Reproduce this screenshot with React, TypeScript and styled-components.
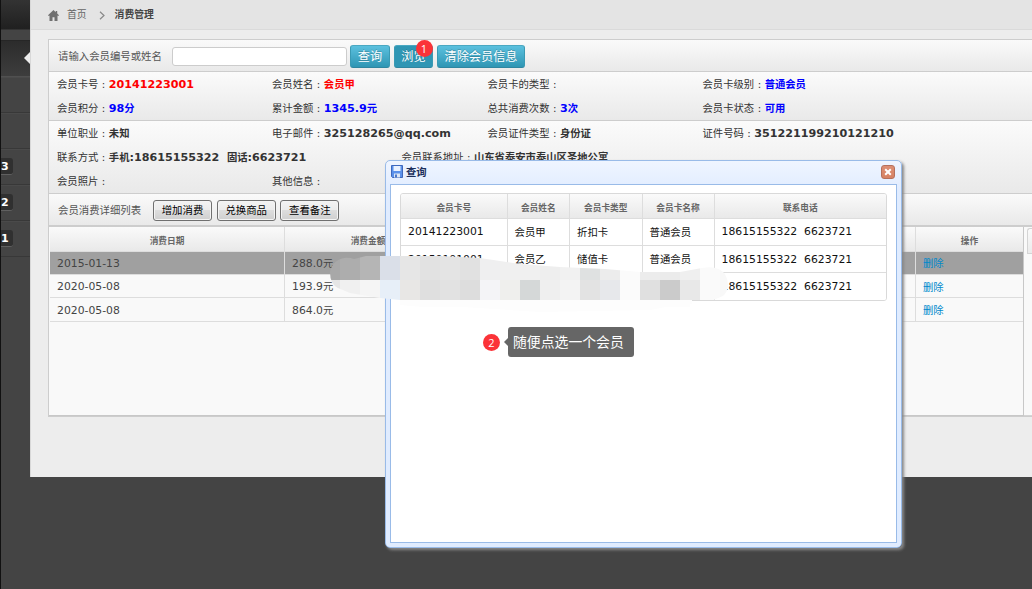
import React from "react";
import styled, { createGlobalStyle } from "styled-components";

const Global = createGlobalStyle`
  * { box-sizing: border-box; }
  html, body { margin: 0; padding: 0; height: 100%; overflow: hidden; }
  body {
    background: #444;
    color: #333;
    font-family: "DejaVu Sans", "Noto Sans CJK SC", sans-serif;
    font-size: 10.33px;
    line-height: 14px;
  }
`;

const Latin = styled.span`
  font-size: 10.82px;
  b & { font-size: 11.15px; }
`;

const Colon = styled.span`
  display: inline-block;
  flex: none;
  width: 10.5px;
  text-align: center;
`;

/* Digits and Latin letters are set slightly larger than the Chinese glyphs. */
const Mixed = ({ text }: { text: string }) => (
  <span>
    {text.split(/([ -~\u00a0]+)/).map((part, i) =>
      /^[ -~\u00a0]+$/.test(part) ? <Latin key={i}>{part}</Latin> : part
    )}
  </span>
);

const Page = styled.div`
  position: relative;
  display: flex;
  width: 1032px;
  height: 589px;
  overflow: hidden;
`;

const Sidebar = styled.aside`
  width: 30px;
  height: 589px;
  border-left: 1px solid #111;
  background: #444;
`;
const SideTop = styled.div`
  height: 30px;
  background: linear-gradient(#333, #202020);
  border-bottom: 1px solid #333;
`;
const SideGap = styled.div`
  height: 11px;
  background: #444;
  border-bottom: 1px solid #262626;
`;
const SideItem = styled.div<{ $active?: boolean }>`
  position: relative;
  display: flex;
  align-items: center;
  height: 36px;
  border-bottom: 1px solid #383838;
  border-top: 1px solid #4a4a4a;
  ${(p) =>
    p.$active &&
    `background: linear-gradient(#2c2c2c, #3d3d3d); border-top-color: #2c2c2c; border-bottom-color: #505050;`}
  &::after {
    content: "";
    display: ${(p) => (p.$active ? "block" : "none")};
    position: absolute;
    right: 0;
    top: 10px;
    border: 6.5px solid transparent;
    border-left: 0;
    border-right-color: #ededed;
  }
`;
const SideBadge = styled.span`
  width: 12px;
  height: 17px;
  margin-bottom: 1px;
  border-radius: 0 3px 3px 0;
  background: #303030;
  border-bottom: 1px solid #606060;
  color: #fff;
  font-size: 11px;
  font-weight: bold;
  line-height: 17px;
`;

const Main = styled.main`
  flex: 1;
  height: 477px;
  background: #ededed;
  border-left: 1px solid #d8d8d8;
  overflow: hidden;
`;
const Breadcrumb = styled.nav`
  display: flex;
  align-items: center;
  height: 30px;
  padding: 1px 0 0 17px;
  background: #e4e4e4;
  border-bottom: 1px solid #dadada;
  svg { flex: none; }
`;
const Crumb = styled.span<{ $current?: boolean; $gap: number }>`
  margin-left: ${(p) => p.$gap}px;
  font-size: 9.8px;
  font-weight: ${(p) => (p.$current ? "bold" : "normal")};
  color: ${(p) => (p.$current ? "#444" : "#666")};
`;
const Chevron = styled.svg`
  margin-left: 12px;
`;

const Panel = styled.section`
  margin: 9px 0 0 17px;
  height: 378px;
  border: 1px solid #cdcdcd;
  border-right: 0;
  background: #f9f9f9;
`;
const SearchBar = styled.div`
  display: flex;
  align-items: center;
  height: 32px;
  padding-left: 9px;
  background: linear-gradient(#fafafa, #e9e9e9);
  border-bottom: 1px solid #cdcdcd;
  color: #555;
`;
const SearchLabel = styled.span`
  width: 114px;
  font-size: 10.4px;
`;
const SearchInput = styled.input`
  width: 175px;
  height: 19px;
  margin: 1px 3px 0 0;
  padding: 0 4px;
  border: 1px solid #ccc;
  border-radius: 3px;
  background: #fff;
`;
const TealButton = styled.button<{ $width: number; $pressed?: boolean }>`
  width: ${(p) => p.$width}px;
  height: 23px;
  margin: 1px 4px 0 0;
  padding: 1px 0 0;
  border: 1px solid #3a9cb8;
  border-color: #4aa8c2 #3a9ab4 #2f86a0;
  border-radius: 3px;
  background: ${(p) => (p.$pressed ? "#2f96b4" : "linear-gradient(#5bc0de, #2f96b4)")};
  color: #fff;
  font-family: inherit;
  font-size: 12.15px;
  line-height: 18px;
  text-shadow: 0 -1px 0 rgba(0, 0, 0, 0.2);
  white-space: nowrap;
`;

const InfoBlock = styled.div<{ $height: number; $columns: string }>`
  display: grid;
  grid-template-columns: ${(p) => p.$columns};
  grid-auto-rows: 24.1px;
  height: ${(p) => p.$height}px;
  padding-left: 8px;
  background: linear-gradient(#fbfbfb, #e9e9e9);
  border-bottom: 1px solid #cdcdcd;
`;
const InfoCell = styled.div<{ $start?: number; $tone?: string }>`
  display: flex;
  align-items: center;
  white-space: pre;
  grid-column-start: ${(p) => p.$start ?? "auto"};
  b { color: ${(p) => p.$tone ?? "#333"}; }
`;

const Info = ({ label, value = "", tone, start }: { label: string; value?: string; tone?: string; start?: number }) => (
  <InfoCell $tone={tone} $start={start}>
    <span>{label}</span>
    <Colon>:</Colon>
    <b><Mixed text={value} /></b>
  </InfoCell>
);

const Toolbar = styled.div`
  display: flex;
  align-items: center;
  height: 33px;
  padding: 1px 0 0 9px;
  background: linear-gradient(#fafafa, #e9e9e9);
  border-bottom: 2px solid #cdcdcd;
  color: #555;
`;
const ToolbarTitle = styled.span`
  width: 95px;
  font-size: 10.4px;
`;
const PlainButton = styled.button`
  width: 59px;
  height: 21px;
  margin-right: 4.7px;
  padding: 0;
  border: 1px solid #707070;
  border-radius: 3px;
  background: linear-gradient(#f3f3f3, #ebebeb 50%, #dddddd 50%, #cfcfcf);
  box-shadow: inset 0 0 0 1px #f4f4f4;
  color: #000;
  font-family: inherit;
  font-size: 10.4px;
  line-height: 16px;
  white-space: nowrap;
`;

const RecordArea = styled.div`
  display: flex;
  height: 189px;
`;
const RecordPane = styled.div`
  width: 975px;
  padding: 0 0 0 1px;
  border-right: 1px solid #c8c8c8;
  border-bottom: 1px solid #c8c8c8;
`;
const ScrollPane = styled.div`
  flex: 1;
  padding: 1px 0 0 3px;
  border-bottom: 1px solid #d4d4d4;
  &::before {
    content: "";
    display: block;
    height: 24px;
    border: 1px solid #d4d4d4;
    border-right: 0;
    border-radius: 3px 0 0 0;
    background: linear-gradient(#fafafa, #ebebeb);
  }
`;
const RecordTable = styled.div`
  border-bottom: 1px solid #ddd;
`;
const RecordRow = styled.div<{ $kind?: "head" | "selected" }>`
  display: grid;
  grid-template-columns: 235px 167px 464px 107px;
  height: ${(p) => (p.$kind === "head" ? 24.6 : 23.2)}px;
  border-bottom: 1px solid #ddd;
  color: #444;
  background: ${(p) =>
    p.$kind === "head" ? "linear-gradient(#fafafa, #e9e9e9)" : p.$kind === "selected" ? "#a0a0a0" : "#f9f9f9"};
  &:last-child { border-bottom: 0; }
`;
const RecordCell = styled.div<{ $head?: boolean }>`
  display: flex;
  align-items: center;
  justify-content: ${(p) => (p.$head ? "center" : "flex-start")};
  padding-left: ${(p) => (p.$head ? 0 : 7)}px;
  padding-top: ${(p) => (p.$head ? 4 : 1.5)}px;
  border-right: 1px solid #ddd;
  font-size: ${(p) => (p.$head ? "8.7px" : "inherit")};
  font-weight: ${(p) => (p.$head ? "bold" : "normal")};
  color: ${(p) => (p.$head ? "#666" : "inherit")};
  white-space: nowrap;
  &:last-child { border-right: 0; }
`;
const DeleteLink = styled.a`
  color: #0088cc;
`;

const Dialog = styled.div`
  position: absolute;
  left: 385px;
  top: 160px;
  width: 517px;
  height: 388px;
  padding: 0 4px 4px;
  border: 1px solid #99bbe8;
  border-radius: 5px;
  background: linear-gradient(#eff5ff, #e0ecff 30px);
  box-shadow: 2px 2px 3px #888;
`;
const DialogHead = styled.div`
  display: flex;
  align-items: center;
  height: 23px;
  padding: 0 2px 2px 1px;
  color: #1c2f5c;
  font-weight: bold;
`;
const DialogTitle = styled.span`
  flex: 1;
  margin-left: 3px;
`;
const CloseButton = styled.button`
  display: flex;
  align-items: center;
  justify-content: center;
  width: 14px;
  height: 14px;
  padding: 0;
  border: 1px solid #b5705c;
  border-radius: 3px;
  background: linear-gradient(#dd8f74, #d78263);
`;
const DialogBody = styled.div`
  height: 359px;
  padding: 8px 9px;
  border: 1px solid #99bbe8;
  background: #fff;
`;
const MemberTable = styled.div`
  width: 487px;
  border: 1px solid #d9d9d9;
  border-radius: 3px;
  overflow: hidden;
`;
const MemberRow = styled.div<{ $head?: boolean }>`
  display: grid;
  grid-template-columns: 106.5px 62.5px 72.5px 72px 1fr;
  height: ${(p) => (p.$head ? 24.5 : 27.4)}px;
  border-bottom: 1px solid #ddd;
  background: ${(p) => (p.$head ? "linear-gradient(#fafafa, #e9e9e9)" : "#fff")};
  &:last-child { border-bottom: 0; height: 26.6px; }
`;
const MemberCell = styled.div<{ $head?: boolean }>`
  display: flex;
  align-items: center;
  justify-content: ${(p) => (p.$head ? "center" : "flex-start")};
  padding: ${(p) => (p.$head ? "4px 0 0" : "0.5px 0 0 7px")};
  border-right: 1px solid #ddd;
  color: ${(p) => (p.$head ? "#666" : "#111")};
  font-size: ${(p) => (p.$head ? "8.7px" : "10.4px")};
  font-weight: ${(p) => (p.$head ? "bold" : "normal")};
  white-space: pre;
  &:last-child { border-right: 0; }
`;

const Mosaic = styled.svg`
  position: absolute;
  left: 320px;
  top: 250px;
  pointer-events: none;
`;
const Marker = styled.span<{ $x: number; $y: number }>`
  position: absolute;
  left: ${(p) => p.$x}px;
  top: ${(p) => p.$y}px;
  width: 17px;
  height: 17px;
  border-radius: 50%;
  background: #fb3338;
  color: #fff;
  font-family: "Open Sans", sans-serif;
  font-size: 11px;
  line-height: 17px;
  text-align: center;
`;
const Tip = styled.div`
  position: absolute;
  left: 508px;
  top: 327px;
  width: 126px;
  height: 30px;
  padding-left: 5px;
  border-radius: 3px;
  background: #666;
  color: #fff;
  font-size: 13.85px;
  line-height: 31px;
  white-space: nowrap;
  &::before {
    content: "";
    position: absolute;
    left: -4px;
    top: 11px;
    border: 4px solid transparent;
    border-left: 0;
    border-right-color: #666;
  }
`;

const records = [
  { date: "2015-01-13", amount: "288.0元" },
  { date: "2020-05-08", amount: "193.9元" },
  { date: "2020-05-08", amount: "864.0元" },
];
const phone = "18615155322\u00a0\u00a06623721";
const members = [
  ["20141223001", "会员甲", "折扣卡", "普通会员", phone],
  ["20150101001", "会员乙", "储值卡", "普通会员", phone],
  ["", "", "", "", phone],
];
const upper = ["#a8a8a8", "#adadad", "#b5b5b5", "#dadfe8", "#e6e6e6", "#e2e2e2", "#e4e4e4", "#e1e1e1", "#efeff0", "#f0f0f0", "#f0f0f0", "#eeeeee", "#f1f1f1", "#dfe1e1", "#ececec", "#fbfbfb", "#ececec", "#ebebeb", "#efefef", "#fafafa", "#f8f8f8"];
const lower = ["#e5e5e5", "#f0f0f0", "#f5f5f5", "#e7eff8", "#e8e7e5", "#dfdfdf", "#e2e2e2", "#dddddd", "#f4f4f7", "#efefed", "#d5d8d8", "#efefef", "#f3f3f3", "#e3e3e3", "#e7e8eb", "#fbfbfb", "#e0e0e0", "#cbcbcb", "#e8e8e8", "#fafafa", "#f8f8f8"];

export default function App() {
  return (
    <Page>
      <Global />
      <Sidebar>
        <SideTop />
        <SideGap />
        <SideItem $active />
        <SideItem />
        <SideItem />
        <SideItem><SideBadge>3</SideBadge></SideItem>
        <SideItem><SideBadge>2</SideBadge></SideItem>
        <SideItem><SideBadge>1</SideBadge></SideItem>
      </Sidebar>
      <Main>
        <Breadcrumb>
          <svg width="11" height="11" viewBox="0 0 11 11"><path d="M5.5 0 0 5.3l.7.8.8-.7V11h3V7.2h2V11h3V5.4l.8.7.7-.8-1.8-1.8V1H7.7v1.2z" fill="#707070" /></svg>
          <Crumb $gap={8}>首页</Crumb>
          <Chevron width="7" height="9" viewBox="0 0 7 9"><path d="m1 .8 4 3.7-4 3.7" fill="none" stroke="#888" strokeWidth="1.2" /></Chevron>
          <Crumb $gap={9} $current>消费管理</Crumb>
        </Breadcrumb>
        <Panel>
          <SearchBar>
            <SearchLabel>请输入会员编号或姓名</SearchLabel>
            <SearchInput />
            <TealButton $width={40}>查询</TealButton>
            <TealButton $width={39} $pressed>浏览</TealButton>
            <TealButton $width={88}>清除会员信息</TealButton>
          </SearchBar>
          <InfoBlock $height={49} $columns="215px 215.5px 215px 1fr">
            <Info label="会员卡号" value="20141223001" tone="#f00" />
            <Info label="会员姓名" value="会员甲" tone="#f00" />
            <Info label="会员卡的类型" />
            <Info label="会员卡级别" value="普通会员" tone="#00f" />
            <Info label="会员积分" value="98分" tone="#00f" />
            <Info label="累计金额" value="1345.9元" tone="#00f" />
            <Info label="总共消费次数" value="3次" tone="#00f" />
            <Info label="会员卡状态" value="可用" tone="#00f" />
          </InfoBlock>
          <InfoBlock $height={73} $columns="215px 129.5px 86px 215px 1fr">
            <Info label="单位职业" value="未知" />
            <Info label="电子邮件" value="325128265@qq.com" />
            <Info label="会员证件类型" value="身份证" start={4} />
            <Info label="证件号码" value="351221199210121210" />
            <Info label="联系方式" value={"手机:18615155322\u00a0\u00a0固话:6623721"} start={1} />
            <Info label="会员联系地址" value="山东省泰安市泰山区圣地公寓" start={3} />
            <Info label="会员照片" start={1} />
            <Info label="其他信息" />
          </InfoBlock>
          <Toolbar>
            <ToolbarTitle>会员消费详细列表</ToolbarTitle>
            <PlainButton>增加消费</PlainButton>
            <PlainButton>兑换商品</PlainButton>
            <PlainButton>查看备注</PlainButton>
          </Toolbar>
          <RecordArea>
            <RecordPane>
              <RecordTable>
                <RecordRow $kind="head">
                  <RecordCell $head>消费日期</RecordCell>
                  <RecordCell $head>消费金额</RecordCell>
                  <RecordCell $head />
                  <RecordCell $head>操作</RecordCell>
                </RecordRow>
                {records.map((r, i) => (
                  <RecordRow key={i} $kind={i === 0 ? "selected" : undefined}>
                    <RecordCell><Mixed text={r.date} /></RecordCell>
                    <RecordCell><Mixed text={r.amount} /></RecordCell>
                    <RecordCell />
                    <RecordCell><DeleteLink>删除</DeleteLink></RecordCell>
                  </RecordRow>
                ))}
              </RecordTable>
            </RecordPane>
            <ScrollPane />
          </RecordArea>
        </Panel>
      </Main>
      <Marker $x={415.5} $y={40}>1</Marker>
      <Dialog>
        <DialogHead>
          <svg width="12" height="13" viewBox="0 0 12 13">
            <path d="M.5.5h11v12h-10l-1-1z" fill="#5b91ea" stroke="#3e68bd" />
            <path d="M2.500 1h7v5h-7z" fill="#eaf2ff" />
            <path d="M3 8.500h6v4H3z" fill="#dfe7f3" />
            <path d="M4 9.500h2v3H4z" fill="#4b78c9" />
          </svg>
          <DialogTitle>查询</DialogTitle>
          <CloseButton aria-label="close">
            <svg width="8" height="8" viewBox="0 0 8 8"><path d="m1.200 1.200 5.600 5.600m0-5.600L1.200 6.800" stroke="#fff" strokeWidth="2" /></svg>
          </CloseButton>
        </DialogHead>
        <DialogBody>
          <MemberTable>
            <MemberRow $head>
              {["会员卡号", "会员姓名", "会员卡类型", "会员卡名称", "联系电话"].map((h) => (
                <MemberCell $head key={h}>{h}</MemberCell>
              ))}
            </MemberRow>
            {members.map((m, i) => (
              <MemberRow key={i}>
                {m.map((v, j) => <MemberCell key={j}><Mixed text={v} /></MemberCell>)}
              </MemberRow>
            ))}
          </MemberTable>
        </DialogBody>
      </Dialog>
      <Mosaic width="420" height="75" viewBox="0 0 420 75">
        <defs>
          <clipPath id="smudge">
            <path d="M10 22C12 10 24 5 34 9L46 6H120L160 8 180 11 200 14 240 17 285 19 320 22 360 22 382 18Q398 15 405 24Q412 38 403 46L386 53 370 54V70H250L80 55V50L60 48 30 43 18 38Q10 34 10 22Z" />
          </clipPath>
        </defs>
        <path d="M80 48H372V52L330 60 220 62 80 53Z" fill="#fdfdfd" />
        <g clipPath="url(#smudge)">
          {upper.map((c, i) => <rect key={i} x={i * 20} y="0" width="20.1" height="30" fill={c} />)}
          {lower.map((c, i) => <rect key={i} x={i * 20} y="30" width="20.1" height="20" fill={c} />)}
          <rect x="80" y="50" width="292" height="7" fill="#fdfdfd" />
        </g>
      </Mosaic>
      <Marker $x={483} $y={333.5}>2</Marker>
      <Tip>随便点选一个会员</Tip>
    </Page>
  );
}
